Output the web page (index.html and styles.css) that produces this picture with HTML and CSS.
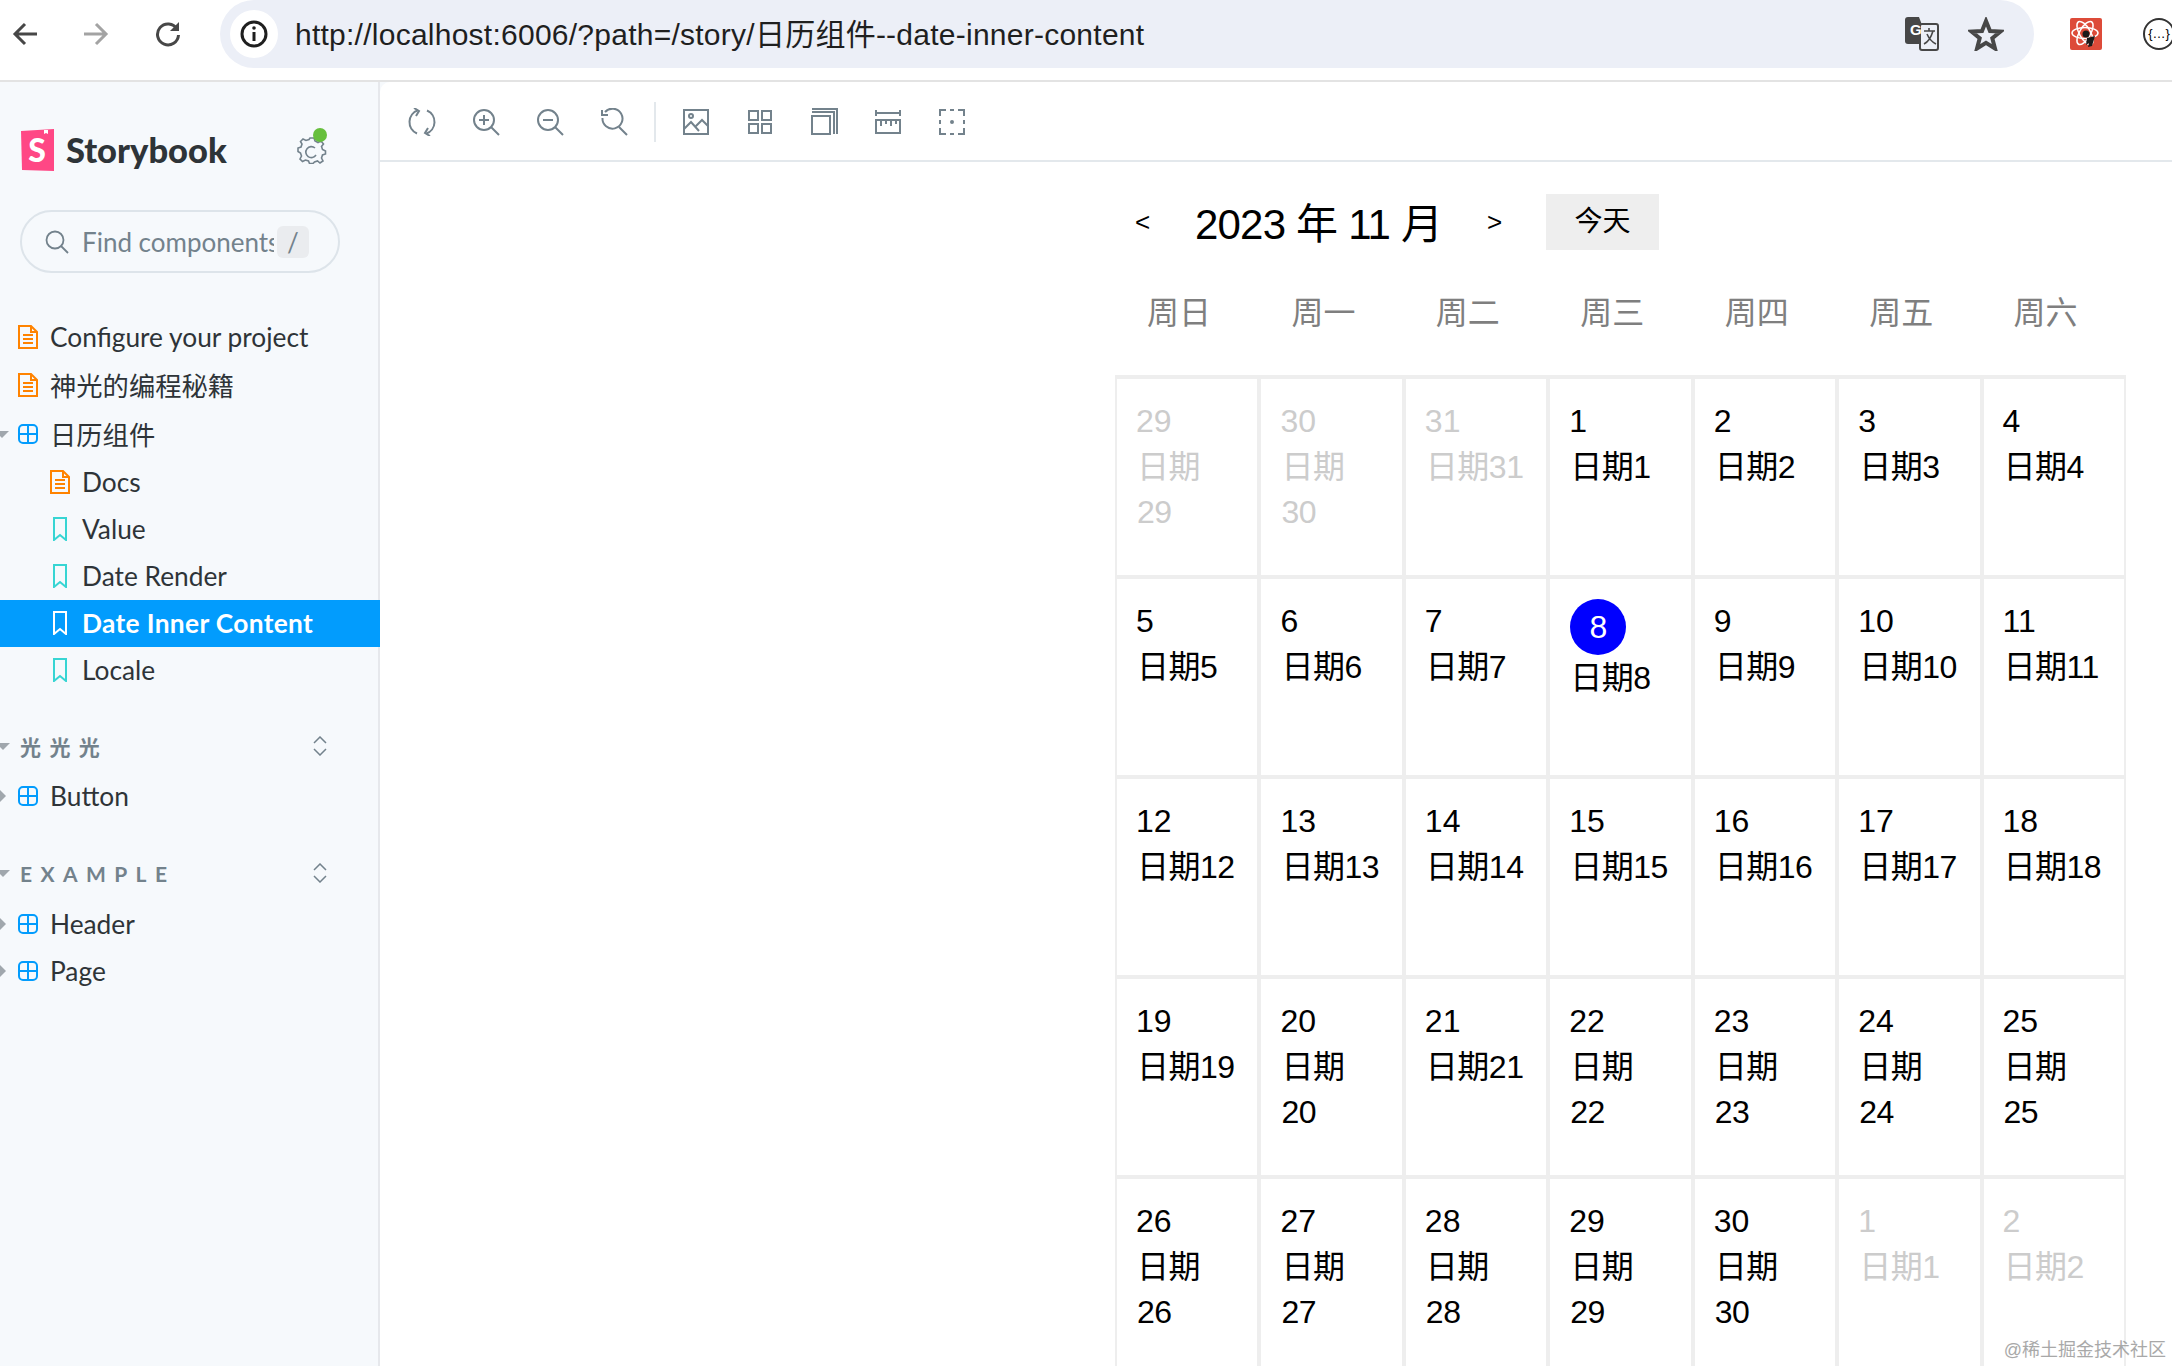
FILE: index.html
```html
<!DOCTYPE html>
<html lang="en">
<head>
  <meta charset="UTF-8">
  <title>Date Inner Content - Storybook</title>
  <link rel="stylesheet" href="styles.css">
</head>
<body>

  <svg class="sprite" width="0" height="0">
    <symbol id="doc" viewBox="0 0 20 24">
      <path d="M1 1H13L19 7V23H1Z M13 1V7H19" fill="none" stroke="currentColor" stroke-width="2"/>
      <path d="M5 10H15M5 14H15M5 18H15" stroke="currentColor" stroke-width="2"/>
    </symbol>
    <symbol id="comp" viewBox="0 0 20 20">
      <rect x="1" y="1" width="18" height="18" rx="4" fill="none" stroke="currentColor" stroke-width="2"/>
      <path d="M10 1V19M1 10H19" stroke="currentColor" stroke-width="2"/>
    </symbol>
    <symbol id="mark" viewBox="0 0 20 24">
      <path d="M4 1H16V23L10 18L4 23Z" fill="none" stroke="currentColor" stroke-width="2"/>
    </symbol>
    <symbol id="caret-down" viewBox="0 0 18 14">
      <path d="M-5 4H9L2 11Z" fill="currentColor"/>
    </symbol>
    <symbol id="caret-right" viewBox="0 0 18 14">
      <path d="M-1 0L6 7L-1 14Z" fill="currentColor"/>
    </symbol>
    <symbol id="updown" viewBox="0 0 14 20">
      <path d="M1 7L7 1L13 7M1 13L7 19L13 13" fill="none" stroke="currentColor" stroke-width="1.5"/>
    </symbol>
  </svg>

  <header class="chrome">
    <svg class="nav-back" width="26" height="24" viewBox="0 0 26 24"><path d="M13 2L3 12L13 22M3 12H25" fill="none" stroke="#474747" stroke-width="3"/></svg>
    <svg class="nav-fwd" width="26" height="24" viewBox="0 0 26 24"><path d="M13 2L23 12L13 22M23 12H1" fill="none" stroke="#a3a3a3" stroke-width="3"/></svg>
    <svg class="nav-reload" width="26" height="26" viewBox="0 0 26 26"><path d="M22 8A10.5 10.5 0 1 0 23.5 14" fill="none" stroke="#474747" stroke-width="3"/><path d="M24 1V10H15Z" fill="#474747"/></svg>
    <div class="omnibox">
      <span class="site-info">
        <svg width="28" height="28" viewBox="0 0 28 28"><circle cx="14" cy="14" r="12" fill="none" stroke="#1f1f1f" stroke-width="3"/><path d="M14 12V21" stroke="#1f1f1f" stroke-width="3"/><circle cx="14" cy="8" r="1.8" fill="#1f1f1f"/></svg>
      </span>
      <span class="url">http://localhost:6006/?path=/story/日历组件--date-inner-content</span>
      <svg class="translate" width="34" height="34" viewBox="0 0 34 34">
        <path d="M3 0H14L24 27H3Q0 27 0 24V3Q0 0 3 0Z" fill="#474747"/>
        <rect x="15" y="7" width="18" height="26" rx="2" fill="#eceff7" stroke="#474747" stroke-width="2"/>
        <text x="5" y="18" class="translate-g">G</text>
        <path d="M19 14H30M24 11V14M28 14Q25 24 19 27M22 17Q25 24 31 27" fill="none" stroke="#474747" stroke-width="1.6"/>
      </svg>
      <svg class="star" width="36" height="34" viewBox="0 0 36 34"><path d="M18 4L22 14L32.5 14.6L24.3 21.3L27 31.5L18 25.8L9 31.5L11.7 21.3L3.5 14.6L14 14Z" fill="none" stroke="#474747" stroke-width="4"/></svg>
    </div>
    <svg class="ext-react" width="32" height="32" viewBox="0 0 32 32">
      <rect width="32" height="32" rx="2" fill="#dd4b39"/>
      <g fill="none" stroke="#fff" stroke-width="1.5">
        <ellipse cx="15" cy="15" rx="13" ry="5.5"/>
        <ellipse cx="15" cy="15" rx="13" ry="5.5" transform="rotate(60 15 15)"/>
        <ellipse cx="15" cy="15" rx="13" ry="5.5" transform="rotate(120 15 15)"/>
      </g>
      <circle cx="16" cy="16" r="3.5" fill="#1b1b1b"/>
      <path d="M17 20L25 18L22 28L18 29L19 25L16 27Z" fill="#1b1b1b"/>
    </svg>
    <span class="ext-json">{…}</span>
  </header>

  <div class="app">
    <aside class="sidebar">
      <div class="brand">
        <svg class="logo" width="34" height="42" viewBox="0 0 34 42">
          <path d="M1 2L34 0V42L2 41Z" fill="#ff4785"/>
          <path d="M24 1H28V5L26 4L24 5Z" fill="#fff"/>
          <text x="17" y="33" text-anchor="middle" class="logo-s">S</text>
        </svg>
        <span class="brand-name">Storybook</span>
        <span class="settings">
          <svg width="30" height="28" viewBox="0 0 30 28">
            <path d="M13 2H17L18 5L21 6.5L24 5L26.5 8L24.5 10.5L25.5 13.5L28.5 15V18L25.5 19L24.5 22L26 25L23 27L20.5 25L17.5 26L16 27.5H12.5L11.5 25L8.5 24L5.5 25.5L3 23L4.5 20L3.5 17L1 15.5V12L4 11L5 8L3.5 5.5L6 3L9 4.5L12 3.5Z" fill="none" stroke="#73828c" stroke-width="1.6"/>
            <path d="M18 12A5.5 5.5 0 1 0 19 19" fill="none" stroke="#73828c" stroke-width="1.6"/>
          </svg>
          <i class="status-dot"></i>
        </span>
      </div>

      <div class="search">
        <svg width="24" height="24" viewBox="0 0 24 24"><circle cx="10" cy="10" r="8.5" fill="none" stroke="#73828c" stroke-width="1.8"/><path d="M16 16L23 23" stroke="#73828c" stroke-width="1.8"/></svg>
        <span class="search-text">Find components</span>
        <span class="search-key">/</span>
      </div>

      <nav class="tree">
        <div class="row row-first"><span class="caret"></span><svg class="icon icon-doc"><use href="#doc"/></svg>Configure your project</div>
        <div class="row row-cjk"><span class="caret"></span><svg class="icon icon-doc"><use href="#doc"/></svg>神光的编程秘籍</div>
        <div class="row row-cjk"><svg class="caret"><use href="#caret-down"/></svg><svg class="icon icon-comp"><use href="#comp"/></svg>日历组件</div>
        <div class="row row-child"><svg class="icon icon-doc"><use href="#doc"/></svg>Docs</div>
        <div class="row row-child"><svg class="icon icon-mark"><use href="#mark"/></svg>Value</div>
        <div class="row row-child"><svg class="icon icon-mark"><use href="#mark"/></svg>Date Render</div>
        <div class="row row-child row-active"><svg class="icon icon-mark"><use href="#mark"/></svg>Date Inner Content</div>
        <div class="row row-child"><svg class="icon icon-mark"><use href="#mark"/></svg>Locale</div>

        <div class="section section-guang"><svg class="caret section-caret"><use href="#caret-down"/></svg><span class="section-name">光光光</span><svg class="updown"><use href="#updown"/></svg></div>
        <div class="row"><svg class="caret"><use href="#caret-right"/></svg><svg class="icon icon-comp"><use href="#comp"/></svg>Button</div>

        <div class="section"><svg class="caret section-caret"><use href="#caret-down"/></svg><span class="section-name">Example</span><svg class="updown"><use href="#updown"/></svg></div>
        <div class="row"><svg class="caret"><use href="#caret-right"/></svg><svg class="icon icon-comp"><use href="#comp"/></svg>Header</div>
        <div class="row"><svg class="caret"><use href="#caret-right"/></svg><svg class="icon icon-comp"><use href="#comp"/></svg>Page</div>
      </nav>
    </aside>

    <main class="main">
      <div class="toolbar">
        <svg class="tool" viewBox="0 0 28 28"><path d="M10 2.2A12.5 12.5 0 0 0 9 25.5M18 25.8A12.5 12.5 0 0 0 19 2.5" fill="none"/><path d="M6 0L11 3L8 8M22 28L17 25L20 20" fill="none"/></svg>
        <svg class="tool" viewBox="0 0 28 28"><circle cx="12" cy="12" r="10" fill="none"/><path d="M19 19L27 27M12 7V17M7 12H17"/></svg>
        <svg class="tool" viewBox="0 0 28 28"><circle cx="12" cy="12" r="10" fill="none"/><path d="M19 19L27 27M7 12H17"/></svg>
        <svg class="tool" viewBox="0 0 28 28"><path d="M5 4A10 10 0 1 1 2.5 10" fill="none"/><path d="M2 2V7H8M19 19L27 27" fill="none"/></svg>
        <span class="tool-sep"></span>
        <svg class="tool" viewBox="0 0 28 28"><rect x="2" y="2" width="24" height="24" fill="none"/><circle cx="9" cy="8" r="2" fill="none"/><path d="M2 21L9 14L17 23M14 18L20 12L26 18" fill="none"/></svg>
        <svg class="tool" viewBox="0 0 28 28"><path d="M3 3H12V12H3ZM16 3H25V12H16ZM3 16H12V25H3ZM16 16H25V25H16Z" fill="none"/></svg>
        <svg class="tool" viewBox="0 0 28 28"><rect x="2" y="8" width="18" height="18" fill="none"/><path d="M2 4H24V26M2 1H27V26" fill="none"/></svg>
        <svg class="tool" viewBox="0 0 28 28"><path d="M2 5H26M2 2V8M26 2V8" fill="none"/><path d="M2 12H26V25H2ZM7 12V18M12 12V16M17 12V18M22 12V16" fill="none"/></svg>
        <svg class="tool" viewBox="0 0 28 28"><path d="M2 8V2H8M12 2H16M20 2H26V8M26 12V16M26 20V26H20M16 26H12M8 26H2V20M2 16V12" fill="none"/><circle cx="14" cy="14" r="1" fill="#73828c"/></svg>
      </div>

      <section class="canvas">
        <div class="cal-header">
          <span class="cal-prev">&lt;</span>
          <span class="cal-title">2023 年 11 月</span>
          <span class="cal-next">&gt;</span>
          <span class="cal-today">今天</span>
        </div>

        <div class="weekdays">
          <span>周日</span><span>周一</span><span>周二</span><span>周三</span><span>周四</span><span>周五</span><span>周六</span>
        </div>

        <div class="days">
          <div class="day other"><div class="num">29</div><div class="txt">日期<br>29</div></div>
          <div class="day other"><div class="num">30</div><div class="txt">日期<br>30</div></div>
          <div class="day other"><div class="num">31</div><div class="txt">日期31</div></div>
          <div class="day"><div class="num">1</div><div class="txt">日期1</div></div>
          <div class="day"><div class="num">2</div><div class="txt">日期2</div></div>
          <div class="day"><div class="num">3</div><div class="txt">日期3</div></div>
          <div class="day"><div class="num">4</div><div class="txt">日期4</div></div>

          <div class="day"><div class="num">5</div><div class="txt">日期5</div></div>
          <div class="day"><div class="num">6</div><div class="txt">日期6</div></div>
          <div class="day"><div class="num">7</div><div class="txt">日期7</div></div>
          <div class="day"><div class="num selected">8</div><div class="txt">日期8</div></div>
          <div class="day"><div class="num">9</div><div class="txt">日期9</div></div>
          <div class="day"><div class="num">10</div><div class="txt">日期10</div></div>
          <div class="day"><div class="num">11</div><div class="txt">日期11</div></div>

          <div class="day"><div class="num">12</div><div class="txt">日期12</div></div>
          <div class="day"><div class="num">13</div><div class="txt">日期13</div></div>
          <div class="day"><div class="num">14</div><div class="txt">日期14</div></div>
          <div class="day"><div class="num">15</div><div class="txt">日期15</div></div>
          <div class="day"><div class="num">16</div><div class="txt">日期16</div></div>
          <div class="day"><div class="num">17</div><div class="txt">日期17</div></div>
          <div class="day"><div class="num">18</div><div class="txt">日期18</div></div>

          <div class="day"><div class="num">19</div><div class="txt">日期19</div></div>
          <div class="day"><div class="num">20</div><div class="txt">日期<br>20</div></div>
          <div class="day"><div class="num">21</div><div class="txt">日期21</div></div>
          <div class="day"><div class="num">22</div><div class="txt">日期<br>22</div></div>
          <div class="day"><div class="num">23</div><div class="txt">日期<br>23</div></div>
          <div class="day"><div class="num">24</div><div class="txt">日期<br>24</div></div>
          <div class="day"><div class="num">25</div><div class="txt">日期<br>25</div></div>

          <div class="day"><div class="num">26</div><div class="txt">日期<br>26</div></div>
          <div class="day"><div class="num">27</div><div class="txt">日期<br>27</div></div>
          <div class="day"><div class="num">28</div><div class="txt">日期<br>28</div></div>
          <div class="day"><div class="num">29</div><div class="txt">日期<br>29</div></div>
          <div class="day"><div class="num">30</div><div class="txt">日期<br>30</div></div>
          <div class="day other"><div class="num">1</div><div class="txt">日期1</div></div>
          <div class="day other"><div class="num">2</div><div class="txt">日期2</div></div>
        </div>
      </section>
    </main>
  </div>

  <div class="watermark">@稀土掘金技术社区</div>

</body>
</html>
```

FILE: styles.css
```css
* {
  box-sizing: border-box;
}

html, body {
  height: 100%;
}

body {
  margin: 0;
  height: 1366px;
  overflow: hidden;
  position: relative;
  background: #fff;
  font-family: "Liberation Sans", "Noto Sans CJK SC", sans-serif;
  color: #000;
}

.sprite {
  position: absolute;
}

/* browser bar */
.chrome {
  height: 82px;
  display: flex;
  align-items: flex-start;
  border-bottom: 2px solid #e3e3e3;
  background: #fff;
  overflow: hidden;
}

.nav-back {
  flex: none;
  margin: 22px 0 0 12px;
}

.nav-fwd {
  flex: none;
  margin: 22px 0 0 45px;
}

.nav-reload {
  flex: none;
  margin: 21px 0 0 46px;
}

.omnibox {
  width: 1814px;
  height: 68px;
  flex: none;
  margin-left: 39px;
  padding-left: 10px;
  border-radius: 34px;
  background: #eceff7;
  display: flex;
  align-items: center;
}

.site-info {
  width: 48px;
  height: 48px;
  border-radius: 50%;
  background: #fff;
  display: flex;
  align-items: center;
  justify-content: center;
}

.url {
  margin-left: 17px;
  padding-bottom: 5px;
  font-size: 30px;
  letter-spacing: 0.25px;
  color: #1f1f1f;
}

.translate {
  margin-left: auto;
}

.translate-g {
  font: bold 15px "Liberation Sans", sans-serif;
  fill: #fff;
}

.star {
  margin: 0 30px 0 29px;
}

.ext-react {
  flex: none;
  margin: 18px 0 0 36px;
}

.ext-json {
  width: 32px;
  height: 32px;
  margin: 18px 0 0 41px;
  flex: none;
  border: 2px solid #333;
  border-radius: 50%;
  font-size: 13px;
  line-height: 27px;
  text-align: center;
  white-space: nowrap;
}

.app {
  display: flex;
  height: 1284px;
  background: #f6f9fc;
}

/* sidebar */
.sidebar {
  width: 380px;
  flex: none;
  box-shadow: inset -2px 0 0 #e6e8ec;
  font-family: Lato, "Noto Sans CJK SC", sans-serif;
  color: #2e3438;
}

.brand {
  height: 42px;
  margin-top: 47px;
  padding-left: 20px;
  display: flex;
  align-items: center;
}

.logo-s {
  font: 900 32px Lato, sans-serif;
  fill: #fff;
}

.brand-name {
  width: 170px;
  margin-left: 12px;
  padding-bottom: 2px;
  font-size: 34.5px;
  font-weight: 900;
  color: #2e3438;
}

.settings {
  position: relative;
  margin-left: 61px;
  display: flex;
}

.status-dot {
  position: absolute;
  top: -8px;
  right: 0;
  width: 14px;
  height: 14px;
  border-radius: 50%;
  background: #66bf3c;
}

.search {
  width: 320px;
  height: 63px;
  margin: 39px 0 0 20px;
  padding-left: 23px;
  border: 2px solid #dde4ea;
  border-radius: 32px;
  display: flex;
  align-items: center;
  font-size: 26px;
  color: #73828c;
}

.search-text {
  width: 192px;
  margin-left: 13px;
  overflow: hidden;
  white-space: nowrap;
}

.search-key {
  width: 32px;
  height: 32px;
  margin-left: 3px;
  border-radius: 6px;
  background: #eaecef;
  text-align: center;
  line-height: 32px;
}

.tree {
  margin-top: 40px;
}

.row {
  height: 47px;
  padding-bottom: 2px;
  display: flex;
  align-items: center;
  font-size: 26.3px;
  white-space: nowrap;
}

.row-first {
  height: 48px;
  padding-bottom: 0;
}

.row-cjk {
  height: 49px;
}

.row-child {
  padding-left: 50px;
}

.row-active {
  background: #029cfd;
  color: #fff;
  font-weight: 700;
  letter-spacing: 0.35px;
}

.row-active .icon {
  color: #fff;
}

.caret {
  width: 18px;
  height: 14px;
  flex: none;
  color: #a0a7ad;
}

.icon {
  width: 20px;
  height: 24px;
  flex: none;
  margin-right: 12px;
}

.icon-doc {
  color: #ff8300;
}

.icon-comp {
  height: 20px;
  color: #029cfd;
}

.icon-mark {
  color: #37d5d3;
}

.section {
  height: 42px;
  margin: 32px 0 7px;
  display: flex;
  align-items: center;
  font-size: 21px;
  font-weight: 700;
  letter-spacing: 8.4px;
  text-transform: uppercase;
  color: #73828c;
}

.section-guang {
  margin: 31px 0 6px;
}

.section-caret {
  width: 20px;
}

.section-name {
  width: 293px;
}

.updown {
  width: 14px;
  height: 20px;
  color: #73828c;
}

/* main area */
.main {
  flex: 1;
  background: #fff;
  border-top-left-radius: 10px;
  overflow: hidden;
}

.toolbar {
  height: 80px;
  padding: 2px 0 0 28px;
  border-bottom: 2px solid #e3e8ec;
  display: flex;
  align-items: center;
  gap: 36px;
}

.tool {
  width: 28px;
  height: 28px;
  flex: none;
  stroke: #73828c;
  stroke-width: 2;
}

.tool-sep {
  width: 2px;
  height: 40px;
  margin: 0 -10px 0 -10px;
  background: #e3e8ec;
}

.canvas {
  padding: 32px 0 0 735px;
}

.cal-header {
  display: flex;
  align-items: center;
  height: 56px;
  white-space: nowrap;
}

.cal-prev, .cal-next {
  font-size: 26px;
}

.cal-prev {
  width: 60px;
  margin-left: 20px;
}

.cal-title {
  width: 292px;
  padding-bottom: 4px;
  font-size: 42px;
  letter-spacing: -0.8px;
}

.cal-next {
  width: 59px;
}

.cal-today {
  width: 113px;
  height: 56px;
  background: #eee;
  font-size: 28px;
  line-height: 56px;
  text-align: center;
}

.weekdays {
  width: 1011px;
  height: 44px;
  margin: 41px 0 40px;
  display: grid;
  grid-template-columns: repeat(7, 1fr);
  font-size: 32px;
  line-height: 44px;
  color: #7f7f7f;
}

.weekdays span {
  padding-left: 32px;
}

.days {
  width: 1011px;
  border-top: 2px solid #eee;
  display: grid;
  grid-template-columns: repeat(7, 1fr);
  grid-auto-rows: 200px;
}

.day {
  padding: 20px 18px 0 20px;
  border: 2px solid #eee;
  font-size: 32px;
  line-height: 45px;
}

.num {
  margin-left: -1px;
}

.txt {
  margin-top: 1px;
  letter-spacing: -0.5px;
}

.other {
  color: #ccc;
}

.selected {
  width: 56px;
  height: 56px;
  margin-left: 0;
  border-radius: 50%;
  background: #00f;
  color: #fff;
  line-height: 56px;
  text-align: center;
}

.watermark {
  position: absolute;
  right: 6px;
  bottom: 5px;
  font-size: 18px;
  line-height: 22px;
  color: #9a9a9a;
  opacity: 0.85;
}
```
